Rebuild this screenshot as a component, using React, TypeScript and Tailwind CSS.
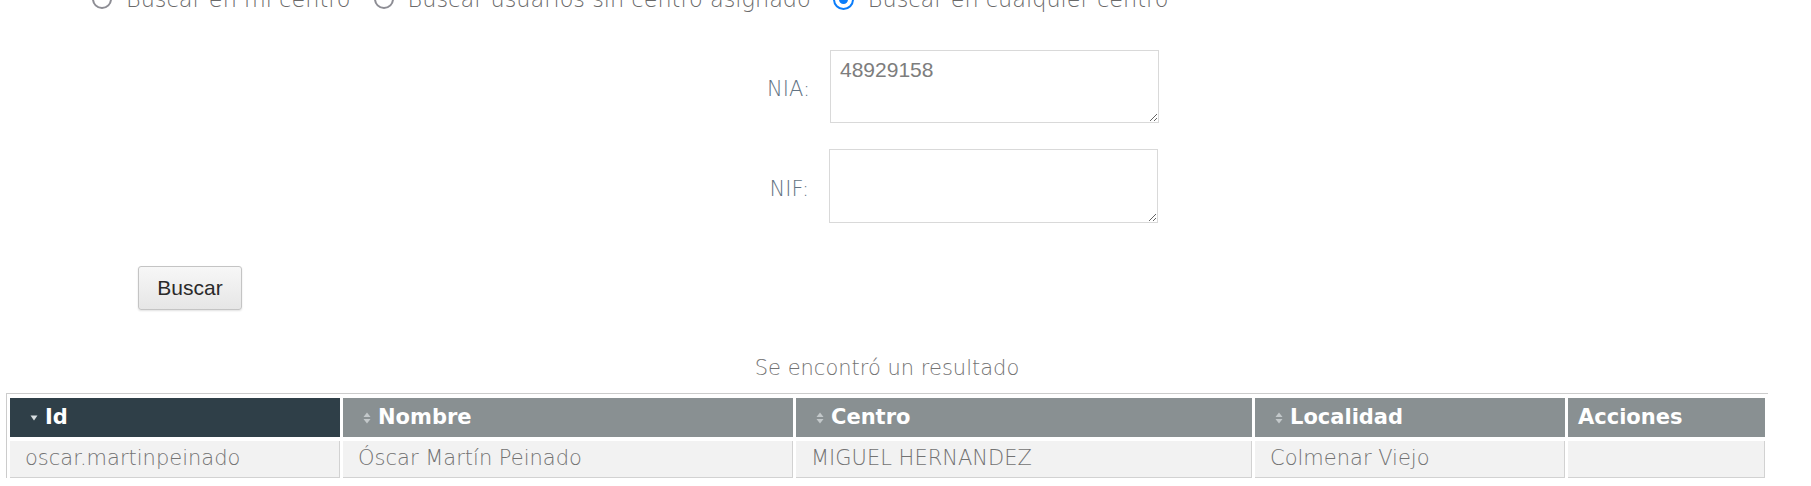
import React from "react";

function Radio({ checked, className = "" }: { checked?: boolean; className?: string }) {
  if (checked) {
    return (
      <span className={`flex h-[21px] w-[21px] shrink-0 items-center justify-center rounded-full border-[2px] border-[#0b7dfa] bg-white ${className}`}>
        <span className="h-[9px] w-[9px] rounded-full bg-[#0b7dfa]" />
      </span>
    );
  }
  return <span className={`block h-[20px] w-[20px] shrink-0 rounded-full border-[2px] border-[#8d8d94] bg-white ${className}`} />;
}

function SortIcon() {
  return (
    <svg width="8" height="12" viewBox="0 0 8 12" className="shrink-0">
      <path d="M4 0.5 L7.5 5 L0.5 5 Z" fill="#c3c8ca" />
      <path d="M4 11.5 L7.5 7 L0.5 7 Z" fill="#c3c8ca" />
    </svg>
  );
}

function DownIcon() {
  return (
    <svg width="8" height="6" viewBox="0 0 8 6" className="shrink-0">
      <path d="M0.5 0.5 L7.5 0.5 L4 5.5 Z" fill="#d7dde0" />
    </svg>
  );
}

const light = "font-['DejaVu_Sans',sans-serif] font-extralight";

export default function App() {
  const headers: { label: string; icon: "down" | "sort" | null; dark?: boolean }[] = [
    { label: "Id", icon: "down", dark: true },
    { label: "Nombre", icon: "sort" },
    { label: "Centro", icon: "sort" },
    { label: "Localidad", icon: "sort" },
    { label: "Acciones", icon: null },
  ];
  const row = ["oscar.martinpeinado", "Óscar Martín Peinado", "MIGUEL HERNANDEZ", "Colmenar Viejo", ""];

  return (
    <div className="h-[486px] w-[1811px] overflow-hidden bg-white">
      {/* radio row (partially cut off) */}
      <div className={`-mt-[15px] flex h-[28px] items-center pl-[92px] text-[22.4px] leading-[28px] text-[#6a6a6a] ${light}`}>
        <Radio />
        <span className="ml-[14px]">Buscar en mi centro</span>
        <Radio className="ml-[23px]" />
        <span className="ml-[14px]">Buscar usuarios sin centro asignado</span>
        <Radio checked className="ml-[22px]" />
        <span className="ml-[14px]">Buscar en cualquier centro</span>
      </div>

      {/* form */}
      <div className="mt-[37px] grid grid-cols-[830px_330px] gap-y-[26px]">
        <div className={`flex items-center justify-end pr-[20px] pt-[7px] text-[21px] text-[#637383] ${light}`}>NIA:</div>
        <textarea
          readOnly
          defaultValue="48929158"
          className="h-[73px] w-[329px] border border-[#d9d9d9] bg-white px-[9px] pb-[6px] pt-[7px] font-['Liberation_Sans',Arial,sans-serif] text-[21px] leading-[24px] text-[#7d7d7d] outline-none"
        />
        <div className={`flex items-center justify-end pr-[21px] pt-[7px] text-[21px] text-[#637383] ${light}`}>NIF:</div>
        <textarea
          readOnly
          defaultValue=""
          className="-ml-[1px] h-[74px] w-[329px] border border-[#d9d9d9] bg-white px-[9px] py-[6px] font-['Liberation_Sans',Arial,sans-serif] text-[21px] leading-[24px] text-[#7d7d7d] outline-none"
        />
      </div>

      {/* button */}
      <div className="mt-[43px] pl-[138px]">
        <button className="h-[44px] w-[104px] rounded-[3px] border border-[#c4c4c4] bg-gradient-to-b from-[#f7f7f7] to-[#e6e6e6] font-['Liberation_Sans',Arial,sans-serif] text-[21px] text-[#2a2a2a] shadow-[0_1px_2px_rgba(0,0,0,0.12)]">
          Buscar
        </button>
      </div>

      {/* result count */}
      <div className={`ml-[6px] mt-[46px] w-[1762px] text-center text-[21px] leading-[25px] text-[#737373] ${light}`}>
        Se encontró un resultado
      </div>

      {/* table */}
      <div className="ml-[6px] mt-[12px] w-[1762px] border-l border-t border-[#cccccc] pl-[3px] pt-[4px]">
        <div className="grid grid-cols-[330px_450px_456px_310px_197px] gap-x-[3px] gap-y-[4px]">
          {headers.map((h) => (
            <div
              key={h.label}
              className={`flex h-[39px] items-center font-['DejaVu_Sans',sans-serif] text-[21px] font-bold text-white ${
                h.dark ? "bg-[#2f3f48]" : "bg-[#899092]"
              } ${h.icon ? "gap-[7px] pl-[20px]" : "pl-[10px]"}`}
            >
              {h.icon === "down" && <DownIcon />}
              {h.icon === "sort" && <SortIcon />}
              <span>{h.label}</span>
            </div>
          ))}
          {row.map((c, i) => (
            <div
              key={i}
              className={`flex h-[37px] items-center border-b border-r border-[#d2d2d2] bg-[#f2f2f2] pl-[15px] text-[21px] text-[#737373] ${light}`}
            >
              {c}
            </div>
          ))}
        </div>
      </div>
    </div>
  );
}
